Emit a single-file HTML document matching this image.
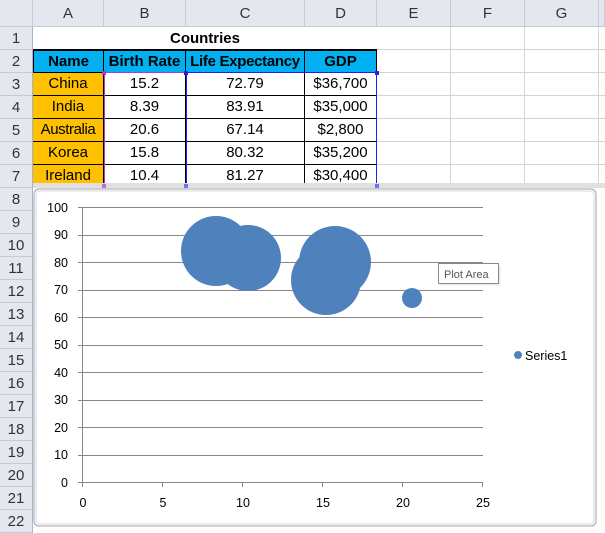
<!DOCTYPE html><html><head><style>
body{margin:0;width:605px;height:531px;overflow:hidden;background:#fff;font-family:"Liberation Sans",sans-serif;position:relative}
.a{position:absolute;box-sizing:border-box}
.ch{background:#e4e8ee;border-right:1px solid #c5cbd3;border-bottom:1px solid #c5cbd3;font-size:15px;color:#333;text-align:center;line-height:27px;top:0;height:27px}
.rh{background:#e4e8ee;border-bottom:1px solid #c5cbd3;border-right:1px solid #9eb6ce;font-size:15px;color:#333;text-align:center;left:0;width:33px;height:23px;line-height:23px}
.c{font-size:15px;text-align:center;line-height:22px;height:23px;border-right:1px solid #000;border-bottom:1px solid #000}
</style></head><body>
<div class="a ch" style="left:0;width:33px"></div>
<div class="a ch" style="left:33px;width:71px">A</div>
<div class="a ch" style="left:104px;width:82px">B</div>
<div class="a ch" style="left:186px;width:119px">C</div>
<div class="a ch" style="left:305px;width:72px">D</div>
<div class="a ch" style="left:377px;width:74px">E</div>
<div class="a ch" style="left:451px;width:74px">F</div>
<div class="a ch" style="left:525px;width:74px">G</div>
<div class="a ch" style="left:599px;width:6px"></div>
<div class="a rh" style="top:27px">1</div><div class="a rh" style="top:50px">2</div><div class="a rh" style="top:73px">3</div><div class="a rh" style="top:96px">4</div><div class="a rh" style="top:119px">5</div><div class="a rh" style="top:142px">6</div><div class="a rh" style="top:165px">7</div><div class="a rh" style="top:188px">8</div><div class="a rh" style="top:211px">9</div><div class="a rh" style="top:234px">10</div><div class="a rh" style="top:257px">11</div><div class="a rh" style="top:280px">12</div><div class="a rh" style="top:303px">13</div><div class="a rh" style="top:326px">14</div><div class="a rh" style="top:349px">15</div><div class="a rh" style="top:372px">16</div><div class="a rh" style="top:395px">17</div><div class="a rh" style="top:418px">18</div><div class="a rh" style="top:441px">19</div><div class="a rh" style="top:464px">20</div><div class="a rh" style="top:487px">21</div><div class="a rh" style="top:510px">22</div>
<div class="a" style="left:377px;top:27px;width:228px;height:161px;background:repeating-linear-gradient(to bottom,transparent 0 22px,#d4d4d4 22px 23px),repeating-linear-gradient(to right,transparent 0 73px,#d4d4d4 73px 74px)"></div>
<div class="a" style="left:33px;top:27px;width:344px;height:23px;font-size:15px;font-weight:bold;text-align:center;line-height:23px;border-bottom:1px solid #000">Countries</div>
<div class="a c" style="left:33px;top:50px;width:71px;background:#00b0f0;font-weight:bold;border-left:1px solid #000;border-top:1px solid #000">Name</div>
<div class="a c" style="left:104px;top:50px;width:82px;background:#00b0f0;font-weight:bold;border-top:1px solid #000">Birth Rate</div>
<div class="a c" style="left:186px;top:50px;width:119px;background:#00b0f0;font-weight:bold;border-top:1px solid #000;letter-spacing:-0.3px">Life Expectancy</div>
<div class="a c" style="left:305px;top:50px;width:72px;background:#00b0f0;font-weight:bold;border-top:1px solid #000">GDP</div>

<div class="a c" style="left:33px;top:73px;width:71px;background:#ffc000">China</div><div class="a c" style="left:104px;top:73px;width:82px">15.2</div><div class="a c" style="left:186px;top:73px;width:119px">72.79</div><div class="a c" style="left:305px;top:73px;width:72px">$36,700</div>
<div class="a c" style="left:33px;top:96px;width:71px;background:#ffc000">India</div><div class="a c" style="left:104px;top:96px;width:82px">8.39</div><div class="a c" style="left:186px;top:96px;width:119px">83.91</div><div class="a c" style="left:305px;top:96px;width:72px">$35,000</div>
<div class="a c" style="left:33px;top:119px;width:71px;background:#ffc000;letter-spacing:-0.4px">Australia</div><div class="a c" style="left:104px;top:119px;width:82px">20.6</div><div class="a c" style="left:186px;top:119px;width:119px">67.14</div><div class="a c" style="left:305px;top:119px;width:72px">$2,800</div>
<div class="a c" style="left:33px;top:142px;width:71px;background:#ffc000">Korea</div><div class="a c" style="left:104px;top:142px;width:82px">15.8</div><div class="a c" style="left:186px;top:142px;width:119px">80.32</div><div class="a c" style="left:305px;top:142px;width:72px">$35,200</div>
<div class="a c" style="left:33px;top:165px;width:71px;background:#ffc000">Ireland</div><div class="a c" style="left:104px;top:165px;width:82px">10.4</div><div class="a c" style="left:186px;top:165px;width:119px">81.27</div><div class="a c" style="left:305px;top:165px;width:72px">$30,400</div>
<div class="a" style="left:104px;top:72px;width:83px;height:115px;border:1px solid #a040d0"></div>
<div class="a" style="left:186px;top:72px;width:191px;height:115px;border:1px solid #2020f0"></div>
<div class="a" style="left:33px;top:183px;width:572px;height:5px;background:#e0e0e0"></div>
<svg class="a" style="left:0;top:0" width="605" height="531">
<rect x="102" y="71" width="4" height="4" fill="#a040d0"/><rect x="184" y="71" width="4" height="4" fill="#2020f0"/><rect x="375" y="71" width="4" height="4" fill="#2020f0"/>
<rect x="102" y="184" width="4" height="4" fill="#b070e0"/><rect x="184" y="184" width="4" height="4" fill="#7070f0"/><rect x="375" y="184" width="4" height="4" fill="#7070f0"/>
<rect x="34" y="189" width="562" height="337" rx="5" fill="#fff" stroke="#a0a0a0"/>
<rect x="36" y="191" width="558" height="333" rx="4" fill="none" stroke="#d8d8d8"/>
<g stroke="#868686" stroke-width="1">
<line x1="78" y1="207.5" x2="483" y2="207.5"/><line x1="78" y1="235.5" x2="483" y2="235.5"/><line x1="78" y1="262.5" x2="483" y2="262.5"/><line x1="78" y1="290.5" x2="483" y2="290.5"/><line x1="78" y1="317.5" x2="483" y2="317.5"/><line x1="78" y1="345.5" x2="483" y2="345.5"/><line x1="78" y1="372.5" x2="483" y2="372.5"/><line x1="78" y1="400.5" x2="483" y2="400.5"/><line x1="78" y1="427.5" x2="483" y2="427.5"/><line x1="78" y1="455.5" x2="483" y2="455.5"/><line x1="78" y1="482.5" x2="483" y2="482.5"/>
<line x1="82.5" y1="207" x2="82.5" y2="482"/>
<line x1="82.5" y1="482" x2="82.5" y2="487"/><line x1="162.5" y1="482" x2="162.5" y2="487"/><line x1="242.5" y1="482" x2="242.5" y2="487"/><line x1="322.5" y1="482" x2="322.5" y2="487"/><line x1="402.5" y1="482" x2="402.5" y2="487"/><line x1="482.5" y1="482" x2="482.5" y2="487"/>
</g>
<g font-family="Liberation Sans" font-size="12.5" fill="#000" text-anchor="end">
<text x="68" y="212">100</text><text x="68" y="239">90</text><text x="68" y="267">80</text><text x="68" y="294">70</text><text x="68" y="322">60</text><text x="68" y="349">50</text><text x="68" y="377">40</text><text x="68" y="404">30</text><text x="68" y="432">20</text><text x="68" y="459">10</text><text x="68" y="487">0</text>
</g>
<g font-family="Liberation Sans" font-size="12.5" fill="#000" text-anchor="middle">
<text x="83" y="507">0</text><text x="163" y="507">5</text><text x="243" y="507">10</text><text x="323" y="507">15</text><text x="403" y="507">20</text><text x="483" y="507">25</text>
</g>
<g fill="#4f81bd">
<circle cx="216" cy="251" r="35"/><circle cx="248" cy="258" r="33"/><circle cx="326" cy="280" r="35"/><circle cx="335" cy="262" r="36"/><circle cx="412" cy="298" r="10"/>
<circle cx="518" cy="355" r="4"/>
</g>
<text x="525" y="360" font-family="Liberation Sans" font-size="12.5">Series1</text>
<rect x="440.5" y="265.5" width="60" height="20" fill="#ddd" opacity=".6"/>
<rect x="438.5" y="263.5" width="60" height="20" fill="#fff" stroke="#888"/>
<text x="444" y="278" font-family="Liberation Sans" font-size="11" fill="#555">Plot Area</text>
</svg>
</body></html>
